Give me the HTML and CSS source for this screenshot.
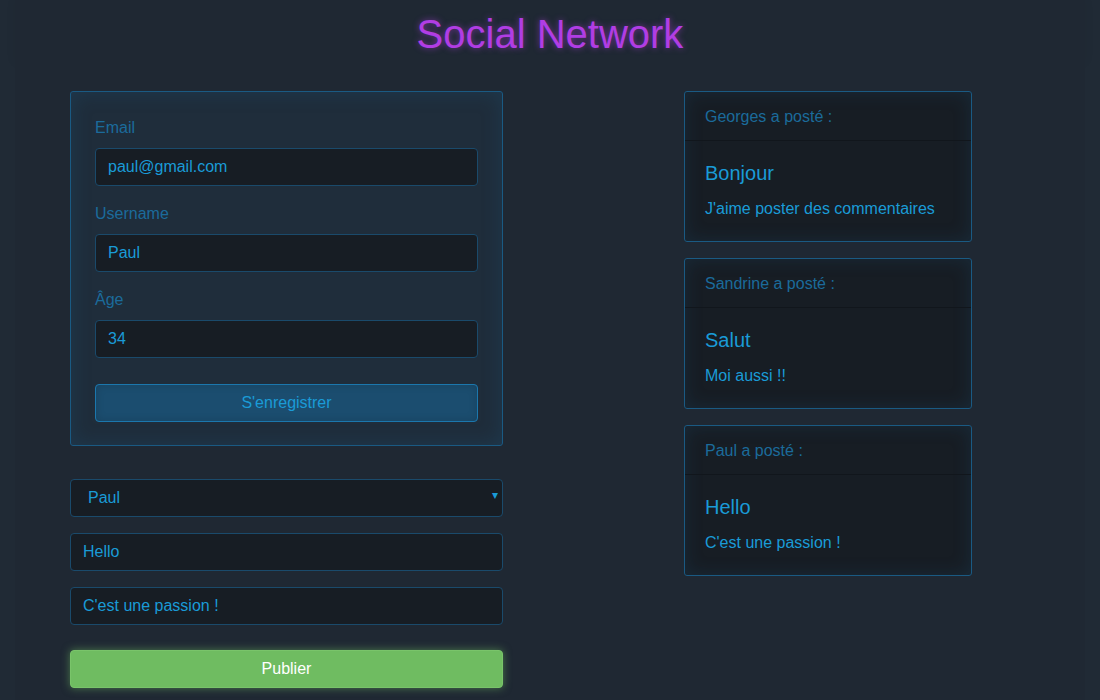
FILE: index.html
```html
<!DOCTYPE html>
<html lang="fr">
<head>
<meta charset="utf-8">
<title>Social Network</title>
<link rel="stylesheet" href="styles.css">
</head>
<body>
<header class="top">
  <h1 class="title">Social Network</h1>
</header>
<main class="layout">
  <section class="left">
    <form class="card-form">
      <div class="group">
        <label class="lbl">Email</label>
        <input class="field" type="text" value="paul@gmail.com">
      </div>
      <div class="group">
        <label class="lbl">Username</label>
        <input class="field" type="text" value="Paul">
      </div>
      <div class="group">
        <label class="lbl">Âge</label>
        <input class="field" type="text" value="34">
      </div>
      <button class="btn-register" type="button">S'enregistrer</button>
    </form>
    <form class="post-form">
      <div class="select-wrap">
        <div class="field select">Paul</div>
        <span class="caret">▾</span>
      </div>
      <input class="field" type="text" value="Hello">
      <input class="field" type="text" value="C'est une passion !">
      <button class="btn-publish" type="button">Publier</button>
    </form>
  </section>
  <section class="right">
    <article class="post">
      <div class="post-head">Georges a posté :</div>
      <div class="post-body">
        <h4 class="post-title">Bonjour</h4>
        <p class="post-text">J'aime poster des commentaires</p>
      </div>
    </article>
    <article class="post">
      <div class="post-head">Sandrine a posté :</div>
      <div class="post-body">
        <h4 class="post-title">Salut</h4>
        <p class="post-text">Moi aussi !!</p>
      </div>
    </article>
    <article class="post">
      <div class="post-head">Paul a posté :</div>
      <div class="post-body">
        <h4 class="post-title">Hello</h4>
        <p class="post-text">C'est une passion !</p>
      </div>
    </article>
  </section>
</main>
</body>
</html>
```
FILE: styles.css
```css
* { box-sizing: border-box; }
html, body { margin: 0; padding: 0; }
body {
  background: #202a35;
  font-family: "Liberation Sans", Arial, sans-serif;
  font-size: 16px;
  color: #1a9bd7;
  width: 1100px;
  height: 700px;
  overflow: hidden;
}
.top {
  margin: 0 15px;
  padding-top: 12px;
  height: 62px;
  background: #1f2833;
  box-shadow: 0 0 10px rgba(0, 0, 0, 0.06);
}
.title {
  margin: 0;
  text-align: center;
  font-size: 40px;
  font-weight: 400;
  line-height: 44px;
  color: #b13de4;
  text-shadow: 0 0 6px rgba(177, 61, 228, 0.6);
}
.layout {
  display: flex;
  gap: 181px;
  background: #1f2833;
  margin: 0 15px;
  padding: 29px 0 0 55px;
  height: 638px;
}
.left { width: 433px; }
.right {
  width: 288px;
  display: flex;
  flex-direction: column;
  gap: 16px;
}
.card-form {
  background: #1f2d3b;
  border: 1px solid #1a5a83;
  border-radius: 3px;
  padding: 24px 24px 23px 24px;
  box-shadow: inset 0 0 20px rgba(30, 90, 130, 0.28);
}
.group { margin-bottom: 16px; }
.lbl {
  display: block;
  font-size: 16px;
  line-height: 22px;
  color: #1b6b9b;
  padding-top: 1px;
  margin-bottom: 9px;
}
.field {
  display: block;
  width: 100%;
  height: 38px;
  background: #171d24;
  border: 1px solid #1a4a6b;
  border-radius: 4px;
  padding: 0 12px;
  font-family: inherit;
  font-size: 16px;
  color: #1a9bd7;
  outline: none;
}
.btn-register {
  display: block;
  width: 100%;
  height: 38px;
  margin-top: 26px;
  background: #1b4d6f;
  border: 1px solid #1b77ad;
  border-radius: 4px;
  font-family: inherit;
  font-size: 16px;
  color: #1a9bd7;
  box-shadow: inset 0 0 8px rgba(0, 0, 0, 0.15);
}
.post-form {
  margin-top: 33px;
  display: flex;
  flex-direction: column;
  gap: 16px;
}
.select-wrap { position: relative; }
.select {
  display: flex;
  align-items: center;
  padding-left: 17px;
}
.caret {
  position: absolute;
  right: 5px;
  top: 9px;
  font-size: 12px;
  color: #1a9bd7;
}
.btn-publish {
  display: block;
  width: 100%;
  height: 38px;
  margin-top: 9px;
  background: #6fbc61;
  border: 1px solid #79c46a;
  border-radius: 4px;
  font-family: inherit;
  font-size: 16px;
  color: #ffffff;
  box-shadow: 0 0 8px rgba(111, 188, 97, 0.55);
}
.post {
  background: #171d24;
  border: 1px solid #1a5a83;
  border-radius: 3px;
  box-shadow: inset 0 0 18px rgba(30, 90, 130, 0.22);
}
.post-head {
  height: 49px;
  padding: 14px 20px 10px 20px;
  line-height: 22px;
  font-size: 16px;
  color: #1b6b9b;
  border-bottom: 1px solid #11161c;
}
.post-body {
  padding: 20px 20px 21px 20px;
}
.post-title {
  margin: 0 0 13px 0;
  font-size: 20px;
  font-weight: 400;
  line-height: 24px;
  color: #1a9bd7;
}
.post-text {
  margin: 0;
  font-size: 16px;
  line-height: 22px;
  color: #1a9bd7;
}
```
